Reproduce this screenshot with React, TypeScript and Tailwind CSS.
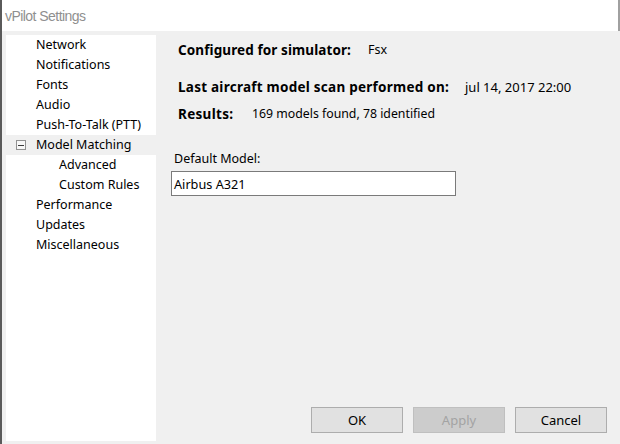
const treeItems = [
  { label: "Network", level: 0 },
  { label: "Notifications", level: 0 },
  { label: "Fonts", level: 0 },
  { label: "Audio", level: 0 },
  { label: "Push-To-Talk (PTT)", level: 0 },
  { label: "Model Matching", level: 0, expandable: true, selected: true },
  { label: "Advanced", level: 1 },
  { label: "Custom Rules", level: 1 },
  { label: "Performance", level: 0 },
  { label: "Updates", level: 0 },
  { label: "Miscellaneous", level: 0 },
];

const App = () => {
  return (
    <div
      className="w-[620px] h-[444px] flex flex-col bg-[#f0f0f0] border-l-2 border-l-[#5a5a5a] text-[12.5px] leading-[16px] text-black overflow-hidden"
      style={{ fontFamily: '"Noto Sans", "Liberation Sans", Arial, sans-serif' }}
    >
      {/* Title bar */}
      <div className="h-[31px] bg-white flex items-center pl-[3px] shrink-0 border-r-2 border-r-[#a0a0a0]">
        <span
          className="text-[14px] text-[#8f8f8f] tracking-[-0.55px]"
          style={{ fontFamily: '"Liberation Sans", Arial, sans-serif' }}
        >
          vPilot Settings
        </span>
      </div>

      <div className="flex flex-1 min-h-0">
        {/* Tree */}
        <div className="ml-[4px] mt-[4px] mb-[3px] w-[150px] bg-white">
          {treeItems.map((item) => (
            <div
              key={item.label}
              className={`h-[20px] flex items-center ${item.selected ? "bg-[#f0f0f0]" : ""}`}
            >
              {item.expandable ? (
                <div className="w-[30px] flex items-center justify-start pl-[10px]">
                  <div className="w-[10px] h-[10px] border border-[#919191] bg-[#f7f7f7] flex items-center justify-center">
                    <div className="w-[6px] h-[1px] bg-[#3b3b3b]" />
                  </div>
                </div>
              ) : (
                <div className={item.level === 1 ? "w-[53px]" : "w-[30px]"} />
              )}
              <span className="whitespace-nowrap">{item.label}</span>
            </div>
          ))}
        </div>

        {/* Content */}
        <div className="flex-1 flex flex-col pl-[15px] pr-[13px]">
          <div className="mt-[9px] h-[20px] flex items-center pl-[7px]">
            <span className="font-bold text-[13.5px] tracking-[0.1px] w-[190px]">Configured for simulator:</span>
            <span>Fsx</span>
          </div>
          <div className="mt-[17px] h-[20px] flex items-center pl-[7px]">
            <span className="font-bold text-[13.5px] tracking-[0.25px] w-[287px] whitespace-nowrap">
              Last aircraft model scan performed on:
            </span>
            <span className="text-[13px]">jul 14, 2017 22:00</span>
          </div>
          <div className="mt-[7px] h-[20px] flex items-center pl-[7px]">
            <span className="font-bold text-[13.5px] tracking-[0.3px] w-[74px]">Results:</span>
            <span className="text-[12.3px]">169 models found, 78 identified</span>
          </div>

          <div className="mt-[25px] h-[20px] flex items-center pl-[3px]">Default Model:</div>
          <div className="mt-[2px] w-[285px] h-[25px] bg-white border border-[#7a7a7a] flex items-center pl-[2px] text-[12.7px]">
            Airbus A321
          </div>

          <div className="mt-auto mb-[11px] flex justify-end gap-[10px] text-[13px]">
            <button className="w-[92px] h-[26px] bg-[#e1e1e1] border border-[#adadad]">OK</button>
            <button className="w-[92px] h-[26px] bg-[#cccccc] border border-[#bfbfbf] text-[#a3a3a3]" disabled>
              Apply
            </button>
            <button className="w-[92px] h-[26px] bg-[#e1e1e1] border border-[#adadad]">Cancel</button>
          </div>
        </div>
      </div>
    </div>
  );
};

export default App;
